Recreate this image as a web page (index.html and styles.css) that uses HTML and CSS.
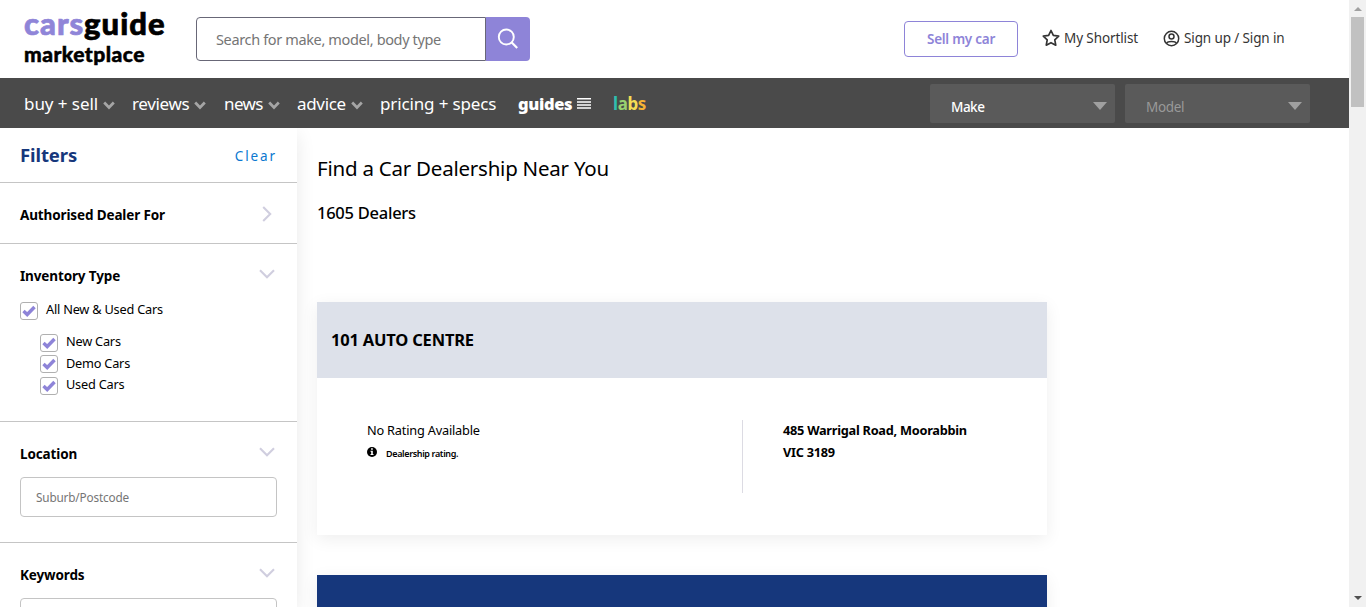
FILE: index.html
```html
<!DOCTYPE html>
<html lang="en">
<head>
<meta charset="utf-8">
<title>Find a Car Dealership Near You | CarsGuide</title>
<link rel="stylesheet" href="styles.css">
</head>
<body>
<svg class="defs" width="0" height="0" aria-hidden="true">
  <symbol id="down" viewBox="0 0 16 10"><path d="M1 1.2 8 8.2 15 1.2" fill="none" stroke="currentColor" stroke-width="2.1"/></symbol>
  <symbol id="caret" viewBox="0 0 12 9"><path d="M1.2 1.5 6 6.5 10.8 1.5" fill="none" stroke="currentColor" stroke-width="2.7"/></symbol>
  <symbol id="tick" viewBox="0 0 14 12"><path d="M1.5 6 5.2 9.5 12.5 2" fill="none" stroke="currentColor" stroke-width="3.4"/></symbol>
</svg>
<div class="page">
  <header class="header">
    <a class="logo"><span class="logo-top"><span class="logo-cars">cars</span><span class="logo-guide">guide</span></span><span class="logo-sub">marketplace</span></a>
    <div class="search">
      <div class="search-field"><span>Search for make, model, body type</span></div>
      <div class="search-button"><svg width="22" height="22" viewBox="0 0 22 22"><circle cx="9.3" cy="9" r="7.5" fill="none" stroke="#fff" stroke-width="1.9"/><path d="M14.5 14.3 20.2 20" stroke="#fff" stroke-width="2.2"/></svg></div>
    </div>
    <div class="sell"><span>Sell my car</span></div>
    <a class="account shortlist"><svg width="18" height="18" viewBox="0 0 18 18"><path d="m9 1.5 2.35 4.9 5.35.75-3.9 3.7.95 5.35L9 13.7l-4.75 2.5.95-5.35-3.9-3.7 5.35-.75z" fill="none" stroke="#343434" stroke-width="1.7" stroke-linejoin="round"/></svg><span>My Shortlist</span></a>
    <a class="account signin"><svg width="17" height="17" viewBox="0 0 17 17" fill="none" stroke="#343434" stroke-width="1.5"><circle cx="8.5" cy="8.5" r="7.2"/><circle cx="8.5" cy="6.6" r="2.5"/><path d="M3.7 13.2c.6-1.5 2.2-1.8 4.8-1.8s4.2.3 4.8 1.8"/></svg><span>Sign up / Sign in</span></a>
  </header>
  <nav class="nav">
    <a class="nav-item buy"><span>buy + sell</span><svg class="caret"><use href="#caret"/></svg></a>
    <a class="nav-item reviews"><span>reviews</span><svg class="caret"><use href="#caret"/></svg></a>
    <a class="nav-item news"><span>news</span><svg class="caret"><use href="#caret"/></svg></a>
    <a class="nav-item advice"><span>advice</span><svg class="caret"><use href="#caret"/></svg></a>
    <a class="nav-item pricing"><span>pricing + specs</span></a>
    <a class="nav-item guides"><span>guides</span><svg width="14" height="11" viewBox="0 0 14 11"><path d="M0 .8h14M0 3.9h14M0 7h14M0 10.1h14" stroke="#fff" stroke-width="1.5"/></svg></a>
    <a class="nav-item labs"><span><b class="l">l</b><b class="a">a</b><b class="b">b</b><b class="s">s</b></span></a>
    <div class="selects">
      <div class="select make"><span>Make</span><i></i></div>
      <div class="select model"><span>Model</span><i></i></div>
    </div>
  </nav>
  <div class="columns">
    <aside class="sidebar">
      <div class="filters-head"><h2>Filters</h2><a>Clear</a></div>
      <section class="group authorised"><div class="group-head"><h3>Authorised Dealer For</h3><svg class="right" viewBox="0 0 10 16"><path d="M1.2 1 8.2 8 1.2 15" fill="none" stroke="currentColor" stroke-width="2.1"/></svg></div></section>
      <section class="group inventory"><div class="group-head"><h3>Inventory Type</h3><svg class="down"><use href="#down"/></svg></div>
        <label class="check all"><i><svg><use href="#tick"/></svg></i><span>All New &amp; Used Cars</span></label>
        <label class="check"><i><svg><use href="#tick"/></svg></i><span>New Cars</span></label>
        <label class="check demo"><i><svg><use href="#tick"/></svg></i><span>Demo Cars</span></label>
        <label class="check"><i><svg><use href="#tick"/></svg></i><span>Used Cars</span></label>
      </section>
      <section class="group location"><div class="group-head"><h3>Location</h3><svg class="down"><use href="#down"/></svg></div><div class="field">Suburb/Postcode</div></section>
      <section class="group keywords"><div class="group-head"><h3>Keywords</h3><svg class="down"><use href="#down"/></svg></div><div class="field"></div></section>
    </aside>
    <main class="main">
      <h1>Find a Car Dealership Near You</h1>
      <p class="count">1605 Dealers</p>
      <article class="card">
        <header><h2>101 AUTO CENTRE</h2></header>
        <div class="card-body">
          <div class="rating"><p>No Rating Available</p><div class="note"><svg width="10" height="10" viewBox="0 0 10 10"><circle cx="5" cy="5" r="5"/><path d="M4.1 1.3h1.7v1.5H4.1zM3.5 3.8h2.3v3.3h.7v1h-3v-1h.7V4.8h-.7z" fill="#fff"/></svg><span>Dealership rating.</span></div></div>
          <address><span class="street">485 Warrigal Road, Moorabbin</span><span class="state">VIC 3189</span></address>
        </div>
      </article>
      <article class="card featured"></article>
    </main>
  </div>
</div>
<div class="scrollbar"><i class="up"></i><i class="thumb"></i><i class="dn"></i></div>
</body>
</html>
```
FILE: styles.css
```css
* { box-sizing: border-box; }
body { margin: 0; display: flex; height: 607px; overflow: hidden; background: #fff; color: #000; font-family: "Noto Sans", sans-serif; }
h1, h2, h3, p, address { margin: 0; font-style: normal; }
span { white-space: nowrap; }
svg { flex: none; display: block; }
.defs { display: none; }
.page { width: 1349px; height: 607px; overflow: hidden; }

.header { display: flex; align-items: flex-start; height: 78px; padding-left: 24px; }
.logo { display: flex; flex-direction: column; width: 172px; padding-top: 4px; font-family: Lato, sans-serif; font-weight: 900; }
.logo-top { font-size: 31px; line-height: 38px; height: 37px; -webkit-text-stroke: .7px; }
.logo-cars { color: #8f85d8; letter-spacing: 1px; }
.logo-guide { letter-spacing: 1px; }
.logo-sub { font-size: 21px; line-height: 26px; letter-spacing: .48px; -webkit-text-stroke: .5px; }
.search { display: flex; width: 334px; height: 44px; margin-top: 17px; }
.search-field { display: flex; align-items: center; width: 290px; padding: 0 0 0 19px; border: 1px solid #686777; border-radius: 4px 0 0 4px; color: #757575; font-size: 14.5px; letter-spacing: -.36px; }
.search-button { display: flex; align-items: center; justify-content: center; width: 44px; background: #8e84d8; border-radius: 0 4px 4px 0; }
.sell { display: flex; align-items: center; justify-content: center; width: 114px; height: 36px; margin: 21px 0 0 374px; border: 1px solid #8e84d8; border-radius: 4px; color: #8e84d8; font-size: 13.5px; font-weight: 600; letter-spacing: -.26px; }
.account { display: flex; align-items: center; height: 20px; margin-top: 28px; color: #343434; font-size: 13.5px; }
.shortlist { width: 120px; margin-left: 24px; gap: 4px; letter-spacing: -.1px; }
.signin { gap: 4px; letter-spacing: -.12px; margin-left: 1px; }

.nav { display: flex; height: 50px; padding-left: 24px; background: #4a4a4a; color: #fff; font-size: 17px; line-height: 50px; }
.nav-item { display: flex; align-items: center; gap: 5px; }
.nav-item span { margin-top: 2px; }
.caret { width: 12px; height: 9px; margin-top: 5px; color: #a5a5a5; }
.buy { width: 108px; letter-spacing: -.06px; }
.reviews { width: 92px; letter-spacing: -.35px; }
.news { width: 73px; letter-spacing: -.63px; }
.advice { width: 83px; letter-spacing: -.33px; }
.pricing { width: 138px; letter-spacing: -.14px; }
.guides { width: 95px; font-weight: 900; font-size: 16.5px; letter-spacing: -.35px; }
.labs { font-size: 17px; letter-spacing: -.4px; }
.l { color: #2dbfae; }
.a { color: #98d070; }
.b { color: #f3dd55; }
.s { color: #f5b335; }
.selects { display: flex; gap: 10px; margin: 6px 39px 5px auto; }
.select { display: flex; align-items: center; justify-content: space-between; width: 185px; height: 39px; padding: 7px 8px 0 21px; background: #5a5a5a; border-radius: 2px; font-size: 13.5px; line-height: 20px; font-weight: 500; letter-spacing: -.5px; }
.select i { border: 7px solid transparent; border-top: 8px solid #a0a0a0; border-bottom: 0; margin-bottom: 3px; }
.model { color: #999; font-weight: 400; letter-spacing: -.35px; }

.columns { display: flex; gap: 20px; height: 479px; }
.sidebar { width: 297px; height: 479px; box-shadow: 0 6px 18px rgba(0,0,0,.09); clip-path: inset(0 -20px 0 0); }
.filters-head { display: flex; align-items: center; justify-content: space-between; height: 55px; padding: 0 20px; border-bottom: 1px solid #c5c5c5; }
.filters-head h2 { color: #16377c; font-size: 18.5px; line-height: 24px; letter-spacing: -.1px; }
.filters-head a { margin-top: 2px; color: #0b78d0; font-size: 13.5px; letter-spacing: 1.9px; }
.group { padding: 0 20px; border-bottom: 1px solid #c5c5c5; }
.group-head { display: flex; align-items: flex-start; justify-content: space-between; height: 42px; padding-top: 22px; }
.group h3 { font-size: 13.5px; line-height: 20px; letter-spacing: -.13px; }
.down { width: 16px; height: 10px; margin: 3px 2px 0; color: #d0cedf; }
.right { width: 10px; height: 16px; margin: 1px 5px 0; color: #d0cedf; }
.authorised { height: 61px; }
.inventory { height: 178px; }
.location { height: 121px; }
.keywords { border: 0; }
.check { display: flex; align-items: flex-start; height: 21px; margin-left: 20px; gap: 8px; font-size: 12.75px; line-height: 18px; letter-spacing: -.22px; }
.check i { display: flex; align-items: center; justify-content: center; width: 18px; height: 18px; border: 1px solid #b0b0b0; border-radius: 3px; color: #8e84d8; }
.check svg { width: 14px; height: 12px; }
.check span { margin-top: -2px; }
.demo { height: 22px; }
.demo span { margin-top: -1px; }
.all { height: 32px; margin: 16px 0 0; }
.field { height: 40px; margin-top: 13px; padding-left: 15px; border: 1px solid #c4c4c4; border-radius: 4px; color: #757575; font-size: 11.75px; line-height: 39px; letter-spacing: -.16px; }

.main { width: 730px; }
h1 { margin-top: 25px; font-size: 20.5px; font-weight: 400; line-height: 30px; letter-spacing: -.23px; }
.count { margin-top: 17px; font-size: 16.5px; font-weight: 500; line-height: 26px; letter-spacing: -.26px; }
.card { height: 233px; margin-top: 76px; background: #fff; box-shadow: 0 4px 16px rgba(0,0,0,.07); }
.card header { height: 76px; padding: 26px 14px; background: #dde1ea; }
.card h2 { font-size: 16.5px; line-height: 24px; letter-spacing: -.2px; }
.card-body { display: flex; padding: 42px 50px; }
.rating { width: 376px; height: 73px; border-right: 1px solid #dcdbe3; font-size: 12.75px; line-height: 20px; letter-spacing: -.2px; }
.note { display: flex; align-items: center; gap: 9px; height: 24px; font-size: 9px; font-weight: 600; letter-spacing: -.36px; }
.note span { margin-top: 3px; }
address { display: flex; flex-direction: column; padding-left: 40px; font-size: 12.75px; line-height: 22px; font-weight: 700; letter-spacing: -.26px; margin-top: -1px; }
.featured { margin-top: 40px; background: #16377c; }

.scrollbar { display: flex; flex-direction: column; align-items: center; width: 17px; height: 607px; padding: 7px 0; background: #f1f1f1; }
.scrollbar i { display: block; }
.up { border: 4px solid transparent; border-top: 0; border-bottom-color: #a0a0a0; }
.thumb { width: 13px; height: 90px; margin-top: 6px; background: #c1c1c1; }
.dn { margin-top: auto; border: 4px solid transparent; border-bottom: 0; border-top-color: #505050; }
```
